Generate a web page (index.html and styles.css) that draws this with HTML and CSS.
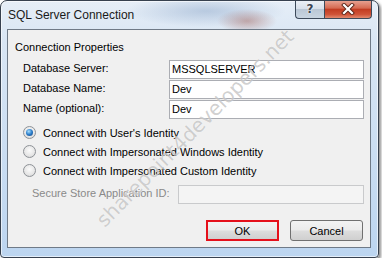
FILE: index.html
```html
<!DOCTYPE html>
<html lang="en">
<head>
    <meta charset="UTF-8">
    <title>SQL Server Connection</title>
    <link rel="stylesheet" href="styles.css">
</head>
<body>
    <div class="window">
        <div class="titlebar">
            <span class="title">SQL Server Connection</span>
            <div class="caption-buttons">
                <span class="cap-btn help">?</span>
                <span class="cap-btn close">
                    <svg width="14" height="12" viewBox="0 0 14 12">
                        <path d="M3 2 L11 10 M11 2 L3 10" stroke="#5a2418" stroke-width="4" stroke-linecap="square"/>
                        <path d="M3 2 L11 10 M11 2 L3 10" stroke="#fff" stroke-width="2.2" stroke-linecap="square"/>
                    </svg>
                </span>
            </div>
        </div>
        <div class="client">
            <div class="group-title">Connection Properties</div>
            <div class="fields">
                <label>Database Server:</label><div class="input">MSSQLSERVER</div>
                <label>Database Name:</label><div class="input">Dev</div>
                <label>Name (optional):</label><div class="input">Dev</div>
            </div>
            <div class="radios">
                <div class="radio-row"><span class="radio checked"></span>Connect with User's Identity</div>
                <div class="radio-row"><span class="radio"></span>Connect with Impersonated Windows Identity</div>
                <div class="radio-row"><span class="radio"></span>Connect with Impersonated Custom Identity</div>
            </div>
            <div class="secure-row">
                <label>Secure Store Application ID:</label><div class="input disabled"></div>
            </div>
            <div class="buttons">
                <button class="btn ok">OK</button>
                <button class="btn">Cancel</button>
            </div>
        </div>
        <div class="watermark">sharepoint4developers.net</div>
    </div>
</body>
</html>
```

FILE: styles.css
```css
body {
    margin: 0;
    background: #fff;
    font-family: 'Liberation Sans', Arial, sans-serif;
    font-size: 11px;
    color: #000;
}
.window {
    position: relative;
    box-sizing: border-box;
    width: 379px;
    height: 258px;
    border: 1px solid #37414f;
    border-radius: 7px 7px 4px 4px;
    padding: 0 7px 9px 6px;
    display: flex;
    flex-direction: column;
    background:
        radial-gradient(ellipse 30px 12px at 246px 20px, rgba(160, 90, 80, 0.45), transparent),
        radial-gradient(ellipse 80px 16px at 205px 10px, rgba(120, 150, 190, 0.4), transparent),
        linear-gradient(180deg, #e6eef7 0px, #d9e6f4 40px, #bcd5f0 100%);
    box-shadow: inset 0 0 0 1px rgba(255, 255, 255, 0.6), 2px 2px 3px rgba(0, 0, 0, 0.45);
    overflow: hidden;
}
.titlebar {
    height: 28px;
    display: flex;
    align-items: flex-start;
}
.title {
    font-size: 12px;
    line-height: 28px;
    padding-left: 1px;
    color: #1a1a1a;
}
.caption-buttons {
    margin-left: auto;
    margin-top: -1px;
    margin-right: -1px;
    display: flex;
}
.cap-btn {
    box-sizing: border-box;
    height: 19px;
    border: 1px solid #3d4a5a;
    border-top: none;
    display: flex;
    align-items: center;
    justify-content: center;
}
.help {
    width: 29px;
    border-right: none;
    border-radius: 0 0 0 4px;
    background: linear-gradient(180deg, #eef2f7 0%, #d8e0ea 48%, #bac7d5 52%, #c9d5e1 100%);
    font-family: 'DejaVu Sans', sans-serif;
    font-weight: bold;
    font-size: 12px;
    color: #3a4452;
    text-shadow: 0 0 2px #fff, 0 0 1px #fff;
}
.close {
    width: 48px;
    border-radius: 0 0 4px 0;
    background: linear-gradient(180deg, #e9a898 0%, #d66a52 45%, #c23c22 52%, #cf5338 80%, #e28a70 100%);
}
.client {
    flex: 1;
    border: 1px solid #6f7a87;
    background: #f0f0f0;
    padding: 8px 6px 6px 7px;
    display: flex;
    flex-direction: column;
}
.group-title {
    line-height: 18px;
}
.fields {
    margin-top: 4px;
    padding-left: 8px;
    display: grid;
    grid-template-columns: 146px 1fr;
    row-gap: 1px;
}
.fields label, .secure-row label {
    line-height: 17px;
}
.input {
    box-sizing: border-box;
    height: 19px;
    border: 1px solid #abadb3;
    background: #fff;
    padding-left: 2px;
    line-height: 17px;
}
.radios {
    margin-top: 4px;
    padding-left: 8px;
}
.radio-row {
    height: 19px;
    display: flex;
    align-items: center;
}
.radio {
    box-sizing: border-box;
    width: 13px;
    height: 13px;
    margin-right: 7px;
    border-radius: 50%;
    border: 1px solid #8e9297;
    background: radial-gradient(circle at 50% 40%, #fbfbfb 0%, #e6e6e6 60%, #cfcfcf 100%);
    display: flex;
    align-items: center;
    justify-content: center;
}
.radio.checked::after {
    content: "";
    width: 7px;
    height: 7px;
    border-radius: 50%;
    background: radial-gradient(circle at 40% 35%, #a8e0ff 0%, #2a7cc9 50%, #17427a 100%);
}
.secure-row {
    margin-top: 5px;
    padding-left: 17px;
    display: grid;
    grid-template-columns: 146px 1fr;
}
.secure-row label {
    color: #8a8a8a;
}
.input.disabled {
    background: #f4f4f4;
    border-color: #c9cacc;
}
.buttons {
    margin-top: auto;
    margin-right: 1px;
    display: flex;
    justify-content: flex-end;
    gap: 11px;
}
.btn {
    box-sizing: border-box;
    width: 73px;
    height: 21px;
    padding: 0;
    border: 1px solid #707070;
    border-radius: 3px;
    background: linear-gradient(180deg, #f3f3f3 0%, #ebebeb 48%, #dddddd 52%, #cfcfcf 100%);
    font-family: inherit;
    font-size: 11px;
    color: #000;
}
.btn.ok {
    border: 2px solid #e5101b;
    border-radius: 0;
}
.watermark {
    position: absolute;
    left: 194px;
    top: 127px;
    transform: translate(-50%, -50%) rotate(-45deg);
    white-space: nowrap;
    font-family: 'DejaVu Sans', sans-serif;
    font-size: 20px;
    color: rgba(150, 150, 150, 0.45);
    text-shadow: 0 0 1px rgba(255, 255, 255, 0.8);
    pointer-events: none;
}
```
